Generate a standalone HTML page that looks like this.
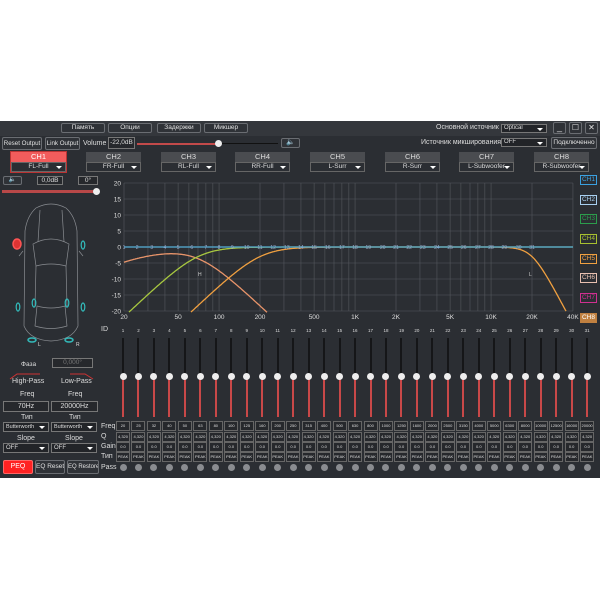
<!DOCTYPE html>
<html><head><meta charset="utf-8"><style>
*{box-sizing:border-box;margin:0;padding:0}
body{width:600px;height:600px;background:#fff;position:relative;overflow:hidden;font-family:"Liberation Sans","Noto Sans CJK SC",sans-serif;color:#ddd;font-size:7px}
#app{position:absolute;left:0;top:121px;width:600px;height:357px;background:#2b2e33}
.a{position:absolute}
.btn{position:absolute;border:1px solid #6a6d72;border-radius:2px;background:#2f3237;color:#e0e0e0;text-align:center;white-space:nowrap;overflow:hidden}
.box{position:absolute;border:1px solid #777;background:#26282c;color:#ddd;text-align:center;white-space:nowrap}
.sel{position:absolute;border:1px solid #777;background:#222428;color:#ddd;padding-left:2px;white-space:nowrap;overflow:hidden}
.sel:after{content:"";position:absolute;right:3px;top:50%;margin-top:-1px;border:3px solid transparent;border-top:3px solid #fff}
.ch{position:absolute;width:55px;height:20px}
.ch .h{height:10px;background:#4a4c50;color:#ddd;text-align:center;font-size:7.5px;line-height:10px}
.ch .s{height:10px;border:1px solid #666;text-align:center;font-size:6.5px;line-height:8px;position:relative;background:#2b2e33}
.ch .s:after{content:"";position:absolute;right:3px;top:3px;border:3px solid transparent;border-top:3px solid #fff}
.lbl{position:absolute;color:#ddd;white-space:nowrap}
.cell{position:absolute;width:14px;height:10px;border:1px solid #666;background:#26282c;color:#ddd;font-size:4px;line-height:8px;text-align:center}
.chl{position:absolute;left:580px;width:17px;height:10px;border:1px solid;font-size:6.5px;line-height:8px;text-align:center}
</style></head><body>
<div id="app">
<div class="a" style="left:0;top:0;width:600px;height:15px;background:#34373c"></div>
<div class="btn" style="left:61px;top:2px;width:44px;height:10px;line-height:8px;font-size:6.5px">Память</div>
<div class="btn" style="left:108px;top:2px;width:44px;height:10px;line-height:8px;font-size:6.5px">Опции</div>
<div class="btn" style="left:157px;top:2px;width:44px;height:10px;line-height:8px;font-size:6.5px">Задержки</div>
<div class="btn" style="left:204px;top:2px;width:44px;height:10px;line-height:8px;font-size:6.5px">Микшер</div>
<div class="lbl" style="left:436px;top:3px;font-size:7px">Основной источник</div>
<div class="sel" style="left:501px;top:3px;width:46px;height:9px;font-size:6px;line-height:7px">Optical</div>
<div class="btn" style="left:553px;top:1px;width:13px;height:12px;font-size:9px;line-height:9px">_</div>
<div class="btn" style="left:569px;top:1px;width:13px;height:12px;font-size:8px;line-height:10px">☐</div>
<div class="btn" style="left:585px;top:1px;width:13px;height:12px;font-size:8px;line-height:10px">✕</div>
<div class="btn" style="left:2px;top:16px;width:40px;height:13px;line-height:11px;font-size:6.2px">Reset Output</div>
<div class="btn" style="left:45px;top:16px;width:35px;height:13px;line-height:11px;font-size:6.2px">Link Output</div>
<div class="lbl" style="left:83px;top:19px;font-size:7px">Volume</div>
<div class="box" style="left:108px;top:16px;width:27px;height:12px;line-height:10px;font-size:6.5px">-22,0dB</div>
<div class="a" style="left:137px;top:22px;width:81px;height:2px;background:#c24a4a"></div>
<div class="a" style="left:218px;top:22px;width:60px;height:1px;background:#111"></div>
<div class="a" style="left:215px;top:19px;width:7px;height:7px;border-radius:50%;background:#eee"></div>
<div class="btn" style="left:281px;top:17px;width:19px;height:10px;font-size:7px;line-height:8px">🔈</div>
<div class="lbl" style="left:421px;top:18px;font-size:7px">Источник микширования</div>
<div class="sel" style="left:501px;top:17px;width:46px;height:9px;font-size:6px;line-height:7px">OFF</div>
<div class="btn" style="left:551px;top:16px;width:46px;height:12px;line-height:10px;font-size:6.5px">Подключенно</div>
<div class="a" style="left:10px;top:30px;width:57px;height:22px;border:1px solid #b33"></div>
<div class="ch" style="left:11px;top:31px"><div class="h" style="background:#f25c5c;color:#fff">CH1</div><div class="s">FL-Full</div></div>
<div class="ch" style="left:86px;top:31px"><div class="h">CH2</div><div class="s">FR-Full</div></div>
<div class="ch" style="left:161px;top:31px"><div class="h">CH3</div><div class="s">RL-Full</div></div>
<div class="ch" style="left:235px;top:31px"><div class="h">CH4</div><div class="s">RR-Full</div></div>
<div class="ch" style="left:310px;top:31px"><div class="h">CH5</div><div class="s">L-Surr</div></div>
<div class="ch" style="left:385px;top:31px"><div class="h">CH6</div><div class="s">R-Surr</div></div>
<div class="ch" style="left:459px;top:31px"><div class="h">CH7</div><div class="s">L-Subwoofer</div></div>
<div class="ch" style="left:534px;top:31px"><div class="h">CH8</div><div class="s">R-Subwoofer</div></div>
<div class="btn" style="left:3px;top:55px;width:19px;height:9px;font-size:6px;line-height:7px">🔈</div>
<div class="box" style="left:37px;top:55px;width:26px;height:9px;font-size:6.5px;line-height:7px">0,0dB</div>
<div class="box" style="left:78px;top:55px;width:20px;height:9px;font-size:6.5px;line-height:7px">0°</div>
<div class="a" style="left:2px;top:69px;width:94px;height:3px;background:#b84848"></div>
<div class="a" style="left:93px;top:67px;width:7px;height:7px;border-radius:50%;background:#eee"></div>
<svg class="a" style="left:0;top:0" width="110" height="235">
<g fill="none" stroke="#8a8d92" stroke-width="0.7" transform="translate(0,5)">
<path d="M36 82 Q51 74 66 82 Q75 90 77 105 L78 200 Q72 214 51 215 Q30 214 24 200 L25 105 Q27 90 36 82Z"/>
<path d="M33 118 Q51 108 69 118 L66 140 Q51 136 36 140Z"/>
<path d="M36 140 L35 180 M66 140 L67 180 M37 180 Q51 184 65 180 L67 200 Q51 205 35 200Z"/>
<path d="M40 84 L38 116 M62 84 L64 116 M23 125 L19 130 M79 125 L83 130"/>
</g>
<ellipse cx="17" cy="123" rx="4" ry="5" fill="#d33" stroke="#f55" stroke-width="1.5"/>
<ellipse cx="83" cy="124" rx="1.8" ry="4" fill="none" stroke="#3bb" stroke-width="1.2"/>
<ellipse cx="18" cy="186" rx="1.8" ry="4" fill="none" stroke="#3bb" stroke-width="1.2"/>
<ellipse cx="34" cy="182" rx="1.8" ry="4" fill="none" stroke="#3bb" stroke-width="1.2"/>
<ellipse cx="67" cy="182" rx="1.8" ry="4" fill="none" stroke="#3bb" stroke-width="1.2"/>
<ellipse cx="83" cy="186" rx="1.8" ry="4" fill="none" stroke="#3bb" stroke-width="1.2"/>
<ellipse cx="32" cy="219" rx="4" ry="2" fill="none" stroke="#3bb" stroke-width="1.5"/>
<ellipse cx="69" cy="219" rx="4" ry="2" fill="none" stroke="#3bb" stroke-width="1.5"/>
</svg>
<div class="lbl" style="left:38px;top:221px;font-size:5px">L</div>
<div class="lbl" style="left:76px;top:221px;font-size:5px">R</div>
<div class="lbl" style="left:21px;top:240px;font-size:6.5px">Фаза</div>
<div class="box" style="left:52px;top:237px;width:41px;height:10px;color:#777;font-size:6.5px;line-height:8px">0,000°</div>
<svg class="a" style="left:0;top:250px" width="100" height="12"><path d="M10 8 L17 3 L40 3" stroke="#c33" fill="none"/><path d="M70 3 L85 3 L93 8" stroke="#c33" fill="none"/></svg>
<div class="lbl" style="left:12px;top:257px;font-size:7px">High-Pass</div>
<div class="lbl" style="left:61px;top:257px;font-size:7px">Low-Pass</div>
<div class="lbl" style="left:20px;top:270px;font-size:7px">Freq</div>
<div class="lbl" style="left:68px;top:270px;font-size:7px">Freq</div>
<div class="box" style="left:3px;top:280px;width:46px;height:11px;font-size:7px;line-height:9px">70Hz</div>
<div class="box" style="left:51px;top:280px;width:47px;height:11px;font-size:7px;line-height:9px">20000Hz</div>
<div class="lbl" style="left:21px;top:293px;font-size:7px">Тип</div>
<div class="lbl" style="left:69px;top:293px;font-size:7px">Тип</div>
<div class="sel" style="left:3px;top:301px;width:46px;height:10px;font-size:5.5px;line-height:8px">Butterworth</div>
<div class="sel" style="left:51px;top:301px;width:46px;height:10px;font-size:5.5px;line-height:8px">Butterworth</div>
<div class="lbl" style="left:17px;top:314px;font-size:7px">Slope</div>
<div class="lbl" style="left:65px;top:314px;font-size:7px">Slope</div>
<div class="sel" style="left:3px;top:322px;width:46px;height:10px;font-size:6px;line-height:8px">OFF</div>
<div class="sel" style="left:51px;top:322px;width:46px;height:10px;font-size:6px;line-height:8px">OFF</div>
<div class="btn" style="left:3px;top:339px;width:30px;height:14px;background:#f22;border-color:#f66;color:#fff;font-size:7px;line-height:12px">PEQ</div>
<div class="btn" style="left:35px;top:339px;width:30px;height:14px;font-size:6.5px;line-height:12px">EQ Reset</div>
<div class="btn" style="left:67px;top:339px;width:32px;height:14px;font-size:6px;line-height:12px">EQ Restore</div>
<svg id="g" class="a" style="left:100px;top:55px" width="480" height="148"></svg>
<div class="chl" style="top:54px;color:#3aa0e0;border-color:#3aa0e0">CH1</div>
<div class="chl" style="top:74px;color:#a8d0f0;border-color:#a8d0f0">CH2</div>
<div class="chl" style="top:93px;color:#2c9c4c;border-color:#2c9c4c">CH3</div>
<div class="chl" style="top:113px;color:#a8c030;border-color:#a8c030">CH4</div>
<div class="chl" style="top:133px;color:#f0a040;border-color:#f0a040">CH5</div>
<div class="chl" style="top:152px;color:#e8c0b0;border-color:#e8c0b0">CH6</div>
<div class="chl" style="top:172px;color:#d03090;border-color:#d03090">CH7</div>
<div class="chl" style="top:192px;color:#fff;background:#c08040;border-color:#c08040">CH8</div>
<div id="eq"></div>
</div>
<script>
var g=document.getElementById('g'),s='';
var X0=24,T=7,B=135;
function fx(f){return X0+136*Math.log10(f/20);}
var fy=function(d){return T+(20-d)*(B-T)/40;};
for(var d=20;d>=-20;d-=5){var y=fy(d);s+='<line x1="'+X0+'" x2="473" y1="'+y+'" y2="'+y+'" stroke="#55585e" stroke-width="0.6"/>';s+='<text x="21" y="'+(y+2.5)+'" fill="#ddd" font-size="6.5" text-anchor="end">'+d+'</text>';}
var gl=[20,30,40,50,60,70,80,90,100,200,300,400,500,600,700,800,900,1000,2000,3000,4000,5000,6000,7000,8000,9000,10000,20000,40000];
gl.forEach(function(f){var x=fx(f);s+='<line x1="'+x+'" x2="'+x+'" y1="'+T+'" y2="'+B+'" stroke="#55585e" stroke-width="0.6"/>';});
[[20,'20'],[50,'50'],[100,'100'],[200,'200'],[500,'500'],[1000,'1K'],[2000,'2K'],[5000,'5K'],[10000,'10K'],[20000,'20K'],[40000,'40K']].forEach(function(a){s+='<text x="'+fx(a[0])+'" y="'+(B+8)+'" fill="#ddd" font-size="6.5" text-anchor="middle">'+a[1]+'</text>';});
function curve(fn,col){var p='';for(var x=X0;x<=473;x+=1){var f=20*Math.pow(10,(x-X0)/136);var d=fn(f);if(d<-20.5)continue;p+=(p?'L':'M')+x+' '+fy(d).toFixed(1);}s+='<path d="'+p+'" fill="none" stroke="'+col+'" stroke-width="1.3"/>';}
function hp(f,fc,n){return -10*Math.log10(1+Math.pow(fc/f,2*n));}
function lp(f,fc,n){return -10*Math.log10(1+Math.pow(f/fc,2*n));}
curve(function(f){return hp(f,28,1)+lp(f,70,2);},'#e8946a');
curve(function(f){return hp(f,70,2);},'#a8c840');
curve(function(f){return hp(f,200,2);},'#f0a040');
curve(function(f){return lp(f,20000,4);},'#f0a040');
s+='<line x1="'+X0+'" x2="473" y1="'+fy(0)+'" y2="'+fy(0)+'" stroke="#3aa0d8" stroke-width="1.2"/>';
var fr=[20,25,32,40,50,63,80,100,125,160,200,250,315,400,500,630,800,1000,1250,1600,2000,2500,3150,4000,5000,6300,8000,10000,12500,16000,20000];
fr.forEach(function(f,i){s+='<text x="'+fx(f)+'" y="'+(fy(0)+2)+'" fill="#9ac" font-size="5" text-anchor="middle">'+(i+1)+'</text>';});
s+='<text x="98" y="100" fill="#ccc" font-size="5">H</text><text x="429" y="100" fill="#ccc" font-size="5">L</text>';
g.innerHTML=s;
var e='';
[['ID',205],['Freq',302],['Q',312],['Gain',322],['Тип',332],['Pass',343]].forEach(function(a){e+='<div class="lbl" style="left:101px;top:'+a[1]+'px;font-size:7px">'+a[0]+'</div>';});
fr.forEach(function(f,i){var x=123+i*15.47;
e+='<div class="lbl" style="left:'+(x-5)+'px;width:10px;text-align:center;top:207px;font-size:4.5px">'+(i+1)+'</div>';
e+='<div class="a" style="left:'+(x-1)+'px;top:217px;width:2px;height:39px;background:#151618"></div>';
e+='<div class="a" style="left:'+(x-1)+'px;top:256px;width:2px;height:40px;background:#c84848"></div>';
e+='<div class="a" style="left:'+(x-3.5)+'px;top:252px;width:7px;height:7px;border-radius:50%;background:#eee"></div>';
[[f,300],['4,320',311],['0.0',321],['PEAK',331]].forEach(function(c){e+='<div class="cell" style="left:'+(x-7)+'px;top:'+c[1]+'px">'+c[0]+'</div>';});
e+='<div class="a" style="left:'+(x-3.5)+'px;top:343px;width:7px;height:7px;border-radius:50%;background:#8a8c90"></div>';
});
document.getElementById('eq').innerHTML=e;
</script>
</body></html>
